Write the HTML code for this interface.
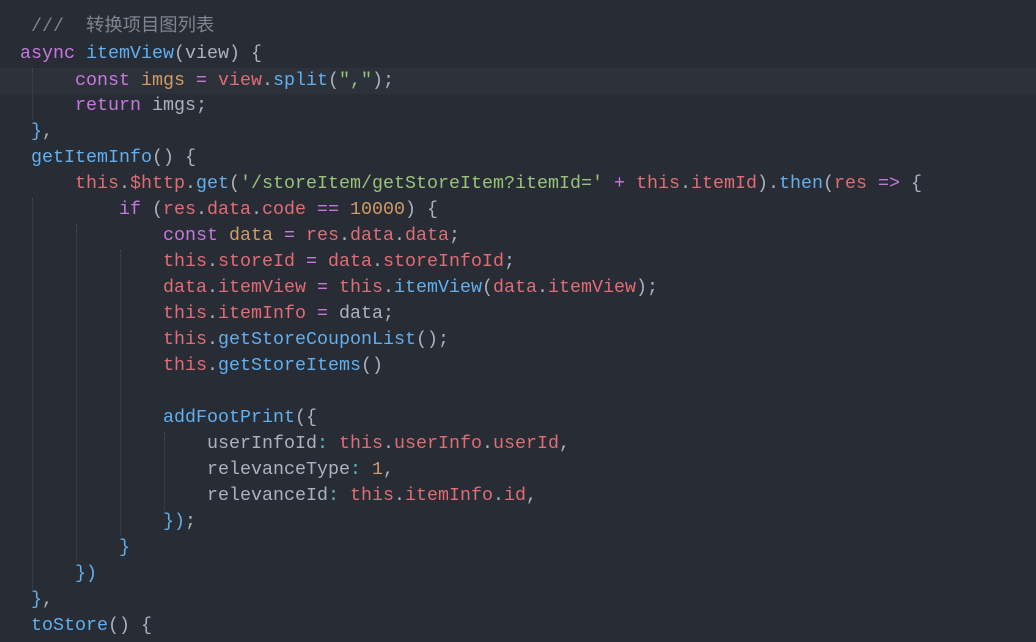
<!DOCTYPE html>
<html><head><meta charset="utf-8"><style>
html,body{margin:0;padding:0;background:#282c34;width:1036px;height:621px;overflow:hidden}
#w{position:absolute;left:0;top:2px;width:1036px;height:640px}
.l{position:absolute;left:0;height:26px;line-height:26px;white-space:pre;font-family:"Liberation Mono","Noto Sans CJK SC",monospace;font-size:18.33px;color:#abb2bf}
.hl{position:absolute;left:0;width:1036px;top:66px;height:26px;background:#2c313a}
.g{position:absolute;width:0;border-left:1px dotted #444b57}
.k{color:#c678dd}.f{color:#61afef}.r{color:#e06c75}.o{color:#d19a66}.s{color:#98c379}.c{color:#7f848e}.y{color:#56b6c2}.b{color:#61afef}
</style></head><body><div id="w">
<div class="hl"></div>
<div class="g" style="left:32px;top:66px;height:52px"></div>
<div class="g" style="left:32px;top:196px;height:390px"></div>
<div class="g" style="left:76px;top:222px;height:338px"></div>
<div class="g" style="left:120px;top:248px;height:286px"></div>
<div class="g" style="left:164px;top:430px;height:78px"></div>
<div class="l" style="top:12px;left:31px"><span class="c">///  转换项目图列表</span></div>
<div class="l" style="top:39px;left:20px"><span class="k">async</span> <span class="f">itemView</span>(view) {</div>
<div class="l" style="top:66px;left:75px"><span class="k">const</span> <span class="o">imgs</span> <span class="k">=</span> <span class="r">view</span>.<span class="f">split</span>(<span class="s">","</span>);</div>
<div class="l" style="top:91px;left:75px"><span class="k">return</span> imgs;</div>
<div class="l" style="top:117px;left:31px"><span class="b">}</span>,</div>
<div class="l" style="top:143px;left:31px"><span class="f">getItemInfo</span>() {</div>
<div class="l" style="top:169px;left:75px"><span class="r">this</span>.<span class="r">$http</span>.<span class="f">get</span>(<span class="s">'/storeItem/getStoreItem?itemId='</span> <span class="k">+</span> <span class="r">this</span>.<span class="r">itemId</span>).<span class="f">then</span>(<span class="r">res</span> <span class="k">=&gt;</span> {</div>
<div class="l" style="top:195px;left:119px"><span class="k">if</span> (<span class="r">res</span>.<span class="r">data</span>.<span class="r">code</span> <span class="k">==</span> <span class="o">10000</span>) {</div>
<div class="l" style="top:221px;left:163px"><span class="k">const</span> <span class="o">data</span> <span class="k">=</span> <span class="r">res</span>.<span class="r">data</span>.<span class="r">data</span>;</div>
<div class="l" style="top:247px;left:163px"><span class="r">this</span>.<span class="r">storeId</span> <span class="k">=</span> <span class="r">data</span>.<span class="r">storeInfoId</span>;</div>
<div class="l" style="top:273px;left:163px"><span class="r">data</span>.<span class="r">itemView</span> <span class="k">=</span> <span class="r">this</span>.<span class="f">itemView</span>(<span class="r">data</span>.<span class="r">itemView</span>);</div>
<div class="l" style="top:299px;left:163px"><span class="r">this</span>.<span class="r">itemInfo</span> <span class="k">=</span> data;</div>
<div class="l" style="top:325px;left:163px"><span class="r">this</span>.<span class="f">getStoreCouponList</span>();</div>
<div class="l" style="top:351px;left:163px"><span class="r">this</span>.<span class="f">getStoreItems</span>()</div>
<div class="l" style="top:403px;left:163px"><span class="f">addFootPrint</span>({</div>
<div class="l" style="top:429px;left:207px">userInfoId<span class="y">:</span> <span class="r">this</span>.<span class="r">userInfo</span>.<span class="r">userId</span>,</div>
<div class="l" style="top:455px;left:207px">relevanceType<span class="y">:</span> <span class="o">1</span>,</div>
<div class="l" style="top:481px;left:207px">relevanceId<span class="y">:</span> <span class="r">this</span>.<span class="r">itemInfo</span>.<span class="r">id</span>,</div>
<div class="l" style="top:507px;left:163px"><span class="b">})</span>;</div>
<div class="l" style="top:533px;left:119px"><span class="b">}</span></div>
<div class="l" style="top:559px;left:75px"><span class="b">})</span></div>
<div class="l" style="top:585px;left:31px"><span class="b">}</span>,</div>
<div class="l" style="top:611px;left:31px"><span class="f">toStore</span>() {</div>
</div></body></html>
